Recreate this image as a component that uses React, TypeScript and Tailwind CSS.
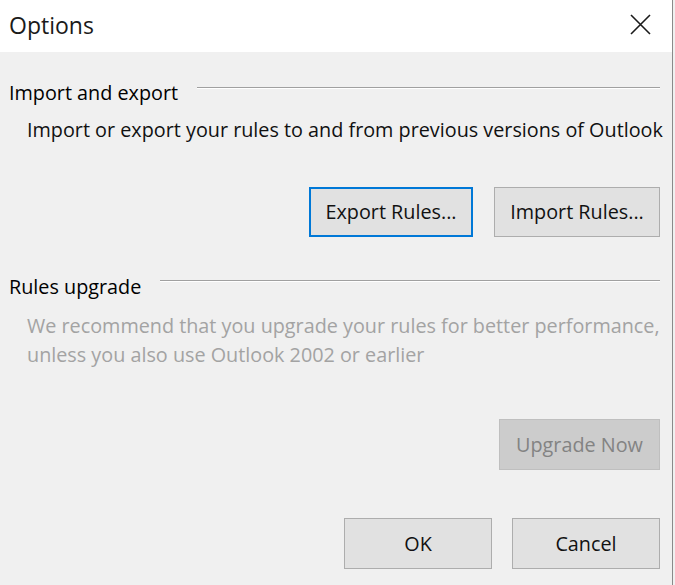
import React from 'react';

const font = { fontFamily: '"Open Sans", "Noto Sans", "Liberation Sans", sans-serif' };

function DialogButton({
  children,
  className,
}: {
  children: React.ReactNode;
  className: string;
}) {
  return (
    <button
      type="button"
      className={`flex items-center justify-center text-[19.8px] leading-none ${className}`}
    >
      {children}
    </button>
  );
}

export default function App() {
  return (
    <div className="w-[675px] h-[585px] flex bg-[#f0f0f0] overflow-hidden" style={font}>
      <div className="w-[673px] flex flex-col border-r border-r-[#8a8a8a]">
        <div className="h-[52px] shrink-0 bg-white flex items-center justify-between pl-[9px] pr-[21px]">
          <span className="text-[23px] text-[#1a1a1a] mt-[-2px]">Options</span>
          <svg width="21" height="21" viewBox="0 0 21 21" className="mt-[-3px]">
            <path d="M1 1 L20 20 M20 1 L1 20" stroke="#1a1a1a" strokeWidth="1.6" fill="none" />
          </svg>
        </div>

        <div className="flex flex-col pl-[9px] pr-[12px]">
          <div className="mt-[27px] flex items-start gap-[19px]">
            <span className="text-[19.8px] leading-[28px] text-black whitespace-nowrap">Import and export</span>
            <div className="flex-1 mt-[8px] border-t border-t-[#a0a0a0] border-b border-b-white" />
          </div>
          <p className="mt-[9px] pl-[18px] text-[19.8px] leading-[28px] text-[#111] whitespace-nowrap">
            Import or export your rules to and from previous versions of Outlook
          </p>
          <div className="mt-[43px] flex justify-end gap-[21px]">
            <DialogButton className="w-[164px] h-[50px] bg-[#e1e1e1] border-2 border-[#0078d7] text-[#111]">
              Export Rules...
            </DialogButton>
            <DialogButton className="w-[166px] h-[50px] bg-[#e1e1e1] border border-[#adadad] text-[#111]">
              Import Rules...
            </DialogButton>
          </div>

          <div className="mt-[36px] flex items-start gap-[19px]">
            <span className="text-[19.8px] leading-[28px] text-black whitespace-nowrap">Rules upgrade</span>
            <div className="flex-1 mt-[7px] border-t border-t-[#a0a0a0] border-b border-b-white" />
          </div>
          <p className="mt-[10px] pl-[18px] text-[19.8px] leading-[29px] text-[#a3a3a3] whitespace-nowrap">
            We recommend that you upgrade your rules for better performance,
            <br />
            unless you also use Outlook 2002 or earlier
          </p>
          <div className="mt-[50px] flex justify-end">
            <DialogButton className="w-[161px] h-[51px] bg-[#cccccc] border border-[#bfbfbf] text-[#838383]">
              Upgrade Now
            </DialogButton>
          </div>

          <div className="mt-[48px] flex justify-end gap-[20px]">
            <DialogButton className="w-[148px] h-[51px] bg-[#e1e1e1] border border-[#adadad] text-[#111]">
              OK
            </DialogButton>
            <DialogButton className="w-[148px] h-[51px] bg-[#e1e1e1] border border-[#adadad] text-[#111]">
              Cancel
            </DialogButton>
          </div>
        </div>
      </div>
    </div>
  );
}
